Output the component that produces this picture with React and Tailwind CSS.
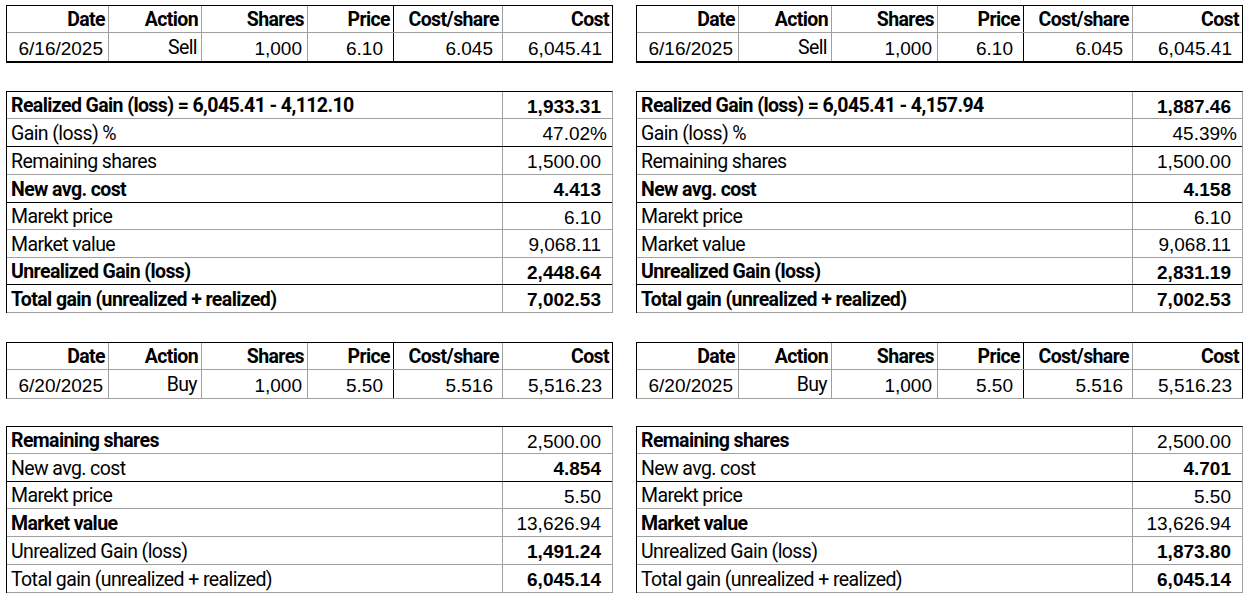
import React from 'react';

const NUM = "font-['Liberation_Sans',Arial,sans-serif] text-[19px] text-black";
const LBL = "font-['Roboto',sans-serif] text-[19.5px] tracking-[-0.6px] text-black";

const colLines = [
    'border-r border-[#9f9f9f]',
    'border-r border-[#9f9f9f]',
    'border-r border-[#9f9f9f]',
    'border-r border-black',
    'border-r border-[#9f9f9f]',
    '',
];
const colWidths = 'grid grid-cols-[102px_93px_106px_86px_109px_109px]';

const TradeTable = ({ trade, heavyBottom, mt }) => {
    const headers = ['Date', 'Action', 'Shares', 'Price', 'Cost/share', 'Cost'];
    const cells = [
        { v: trade.date, cls: `${NUM} pr-[5px]` },
        { v: trade.action, cls: `${LBL} pr-[4px]` },
        { v: trade.shares, cls: `${NUM} pr-[5px]` },
        { v: trade.price, cls: `${NUM} pr-[10px]` },
        { v: trade.costShare, cls: `${NUM} pr-[9px]` },
        { v: trade.cost, cls: `${NUM} pr-[10px]` },
    ];
    return (
        <div className={`${mt} w-[607px] border border-black ${heavyBottom ? 'border-b-2' : 'border-b-[#9f9f9f]'}`}>
            <div className={`${colWidths} h-[27px] border-b border-[#9f9f9f]`}>
                {headers.map((h, i) => (
                    <div key={h} className={`${colLines[i]} ${LBL} font-bold pr-[3px] flex items-center justify-end leading-none pt-[2px]`}>
                        {h}
                    </div>
                ))}
            </div>
            <div className={`${colWidths} h-[28px]`}>
                {cells.map((c, i) => (
                    <div key={i} className={`${colLines[i]} ${c.cls} flex items-center justify-end leading-none pt-[2px]`}>
                        {c.v}
                    </div>
                ))}
            </div>
        </div>
    );
};

const SummaryTable = ({ rows, mt }) => (
    <div className={`${mt} w-[607px] border-t border-l border-black border-r border-r-[#9f9f9f]`}>
        {rows.map((r, i) => (
            <div
                key={i}
                className={`grid grid-cols-[496px_109px] border-b ${r.black ? 'border-black' : 'border-[#9f9f9f]'} ${r.h === 27 ? 'h-[27px]' : 'h-[28px]'}`}
            >
                <div className={`${LBL} ${r.lb ? 'font-bold' : ''} pl-[4px] flex items-center leading-none pt-[2px] border-r border-[#9f9f9f]`}>
                    {r.label}
                </div>
                <div className={`${NUM} ${r.vb ? 'font-bold' : ''} ${r.pct ? 'pr-[5px]' : 'pr-[11px]'} flex items-center justify-end leading-none pt-[2px]`}>
                    {r.value}
                </div>
            </div>
        ))}
    </div>
);

const sell = { date: '6/16/2025', action: 'Sell', shares: '1,000', price: '6.10', costShare: '6.045', cost: '6,045.41' };
const buy = { date: '6/20/2025', action: 'Buy', shares: '1,000', price: '5.50', costShare: '5.516', cost: '5,516.23' };

const realized = (basis, gain, pct, avg, unreal) => [
    { label: `Realized Gain (loss) = 6,045.41 - ${basis}`, value: gain, lb: true, vb: true, h: 27 },
    { label: 'Gain (loss) %', value: pct, pct: true, black: true, h: 28 },
    { label: 'Remaining shares', value: '1,500.00', h: 28 },
    { label: 'New avg. cost', value: avg, lb: true, vb: true, black: true, h: 28 },
    { label: 'Marekt price', value: '6.10', h: 27 },
    { label: 'Market value', value: '9,068.11', h: 28 },
    { label: 'Unrealized Gain (loss)', value: unreal, lb: true, vb: true, black: true, h: 27 },
    { label: 'Total gain (unrealized + realized)', value: '7,002.53', lb: true, vb: true, h: 28 },
];

const afterBuy = (avg, unreal) => [
    { label: 'Remaining shares', value: '2,500.00', lb: true, h: 27 },
    { label: 'New avg. cost', value: avg, vb: true, black: true, h: 28 },
    { label: 'Marekt price', value: '5.50', h: 27 },
    { label: 'Market value', value: '13,626.94', lb: true, h: 28 },
    { label: 'Unrealized Gain (loss)', value: unreal, vb: true, h: 28 },
    { label: 'Total gain (unrealized + realized)', value: '6,045.14', vb: true, h: 28 },
];

const Column = ({ basis, gain, pct, avg, unreal, avg2, unreal2 }) => (
    <div className="flex flex-col">
        <TradeTable trade={sell} heavyBottom mt="mt-[5px]" />
        <SummaryTable rows={realized(basis, gain, pct, avg, unreal)} mt="mt-[28px]" />
        <TradeTable trade={buy} mt="mt-[29px]" />
        <SummaryTable rows={afterBuy(avg2, unreal2)} mt="mt-[27px]" />
    </div>
);

export default function App() {
    return (
        <div className="w-[1249px] h-[595px] bg-white pl-[6px] flex gap-[23px] overflow-hidden">
            <Column basis="4,112.10" gain="1,933.31" pct="47.02%" avg="4.413" unreal="2,448.64" avg2="4.854" unreal2="1,491.24" />
            <Column basis="4,157.94" gain="1,887.46" pct="45.39%" avg="4.158" unreal="2,831.19" avg2="4.701" unreal2="1,873.80" />
        </div>
    );
}
